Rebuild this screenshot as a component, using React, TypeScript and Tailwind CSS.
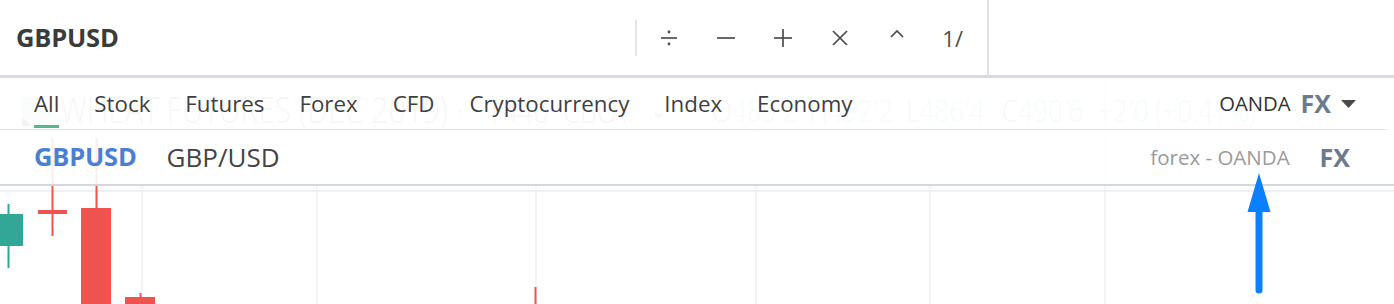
import React from "react";

function Icon({ children, w = 20, h = 20 }: { children: React.ReactNode; w?: number; h?: number }) {
  return (
    <svg width={w} height={h} viewBox={`0 0 ${w} ${h}`} fill="none" stroke="#4d4d4d" strokeWidth={1.7} strokeLinecap="butt">
      {children}
    </svg>
  );
}

function TopBar() {
  return (
    <div className="flex h-[78px] border-b-[3px] border-[#d8dae1] bg-white">
      <div className="flex w-[987px] items-center pl-4 pr-[24px]">
        <span className="text-[25.5px] font-bold tracking-[-0.2px] text-[#3b3b3b]">GBPUSD</span>
        <div className="ml-auto flex items-center">
          <div className="h-[36px] w-[2px] bg-[#e4e5e9]" />
          <div className="ml-[22px] flex items-center gap-[37px]">
            <Icon>
              <line x1="2" y1="10" x2="18" y2="10" />
              <circle cx="10" cy="4" r="1.4" fill="#4d4d4d" stroke="none" />
              <circle cx="10" cy="16" r="1.4" fill="#4d4d4d" stroke="none" />
            </Icon>
            <Icon>
              <line x1="1" y1="10" x2="19" y2="10" />
            </Icon>
            <Icon>
              <line x1="1" y1="10" x2="19" y2="10" />
              <line x1="10" y1="1" x2="10" y2="19" />
            </Icon>
            <Icon>
              <line x1="3" y1="3" x2="17" y2="17" />
              <line x1="17" y1="3" x2="3" y2="17" />
            </Icon>
            <Icon>
              <polyline points="4,9 10,3 16,9" />
            </Icon>
          </div>
          <span className="ml-[35px] text-[22px] leading-none text-[#4d4d4d]">1/</span>
        </div>
      </div>
      <div className="w-[2px] bg-[#e0e2e7]" />
      <div className="flex-1" />
    </div>
  );
}

function Chart() {
  const grid = [142, 317, 536, 756, 930, 1105];
  const red = "#ef5350";
  const green = "#32a697";
  return (
    <div className="absolute inset-0">
      <svg width={1394} height={226} className="absolute left-0 top-0">
        {grid.map((x) => (
          <line key={x} x1={x} y1={0} x2={x} y2={226} stroke="#edf1f5" strokeWidth={1.5} />
        ))}
        <line x1={0} y1={113} x2={1394} y2={113} stroke="#e8edf2" strokeWidth={1.5} />
        <rect x={7.5} y={126} width={2} height={64} fill={green} />
        <rect x={0} y={136} width={23} height={32} fill={green} />
        <rect x={51.5} y={60} width={2} height={98} fill={red} />
        <rect x={38} y={132} width={29} height={4} fill={red} />
        <rect x={95.5} y={60} width={2} height={72} fill={red} />
        <rect x={81} y={130} width={30} height={96} fill={red} />
        <rect x={139.5} y={215} width={2} height={6} fill={red} />
        <rect x={125} y={219} width={30} height={7} fill={red} />
        <rect x={534.5} y={209} width={2} height={17} fill={red} />
      </svg>
      <div className="opacity-50">
        <div className="absolute left-[22px] top-[19px] h-[29px] w-[28px] rounded-[2px] bg-[#b8bcc6]" />
        <div className="absolute left-[22px] top-[39px] h-0 w-0 border-b-[9px] border-r-[9px] border-b-[#131722] border-r-transparent" />
        <div className="absolute top-[12px] flex h-[40px] scale-y-[1.2] items-center text-[30px] font-light leading-none text-[#434651]">
          <span className="absolute left-[60px] whitespace-nowrap">WHEAT FUTURES (DEC 2019)</span>
          <span className="absolute left-[457px]">·</span>
          <span className="absolute left-[487px] text-[27px]">1440</span>
          <span className="absolute left-[548px]">·</span>
          <span className="absolute left-[563px] text-[27px]">CBOT</span>
          <span className="absolute left-[650px] text-[20px]">⌄</span>
          <span className="absolute left-[712px] whitespace-nowrap text-[26px]">
            O<span className="text-[#26a69a]">489′2</span>
          </span>
          <span className="absolute left-[809px] whitespace-nowrap text-[26px]">
            H<span className="text-[#26a69a]">492′2</span>
          </span>
          <span className="absolute left-[906px] whitespace-nowrap text-[26px]">
            L<span className="text-[#26a69a]">486′4</span>
          </span>
          <span className="absolute left-[1002px] whitespace-nowrap text-[26px]">
            C<span className="text-[#26a69a]">490′6</span>
          </span>
          <span className="absolute left-[1098px] whitespace-nowrap text-[26px] text-[#26a69a]">+2′0 (+0.41%)</span>
        </div>
      </div>
    </div>
  );
}

const tabs = ["All", "Stock", "Futures", "Forex", "CFD", "Cryptocurrency", "Index", "Economy"];

function Dropdown() {
  return (
    <div className="relative z-10 bg-white/90">
      <div className="flex h-[52px] w-[1387px] items-stretch border-b border-[#dfe2e8] pl-[34px] pr-[31px]">
        <div className="flex gap-[35px]">
          {tabs.map((t, i) => (
            <div key={t} className="relative flex items-center pt-[1px]">
              <span className="text-[22.3px] leading-none text-[#3f3f3f]">{t}</span>
              {i === 0 && <div className="absolute bottom-[1px] left-0 right-0 h-[3px] bg-[#56b888]" />}
            </div>
          ))}
        </div>
        <div className="ml-auto flex items-center">
          <span className="text-[20.3px] leading-none text-[#333333]">OANDA</span>
          <span className="ml-[10px] text-[25px] font-bold leading-none text-[#6b7a8f]">FX</span>
          <svg width={15} height={8} viewBox="0 0 15 8" className="ml-[10px]">
            <polygon points="0,0 15,0 7.5,8" fill="#4a4a4a" />
          </svg>
        </div>
      </div>
      <div className="flex h-[56px] items-center border-b-2 border-[#d5d7de] pl-[34px] pr-[44px]">
        <span className="text-[25.5px] font-bold leading-none tracking-[-0.2px] text-[#4a7fd3]">GBPUSD</span>
        <span className="ml-[30px] text-[26px] leading-none text-[#444444]">GBP/USD</span>
        <span className="ml-auto text-[20.5px] leading-none text-[#9a9a9a]">forex - OANDA</span>
        <span className="ml-[30px] text-[25px] font-bold leading-none text-[#6b7a8f]">FX</span>
      </div>
    </div>
  );
}

function Arrow() {
  return (
    <svg width={28} height={124} viewBox="0 0 28 124" className="absolute left-[1245px] top-[95px] z-20">
      <polygon points="14,0 25.5,39 2.5,39" fill="#0a80ff" />
      <line x1={14} y1={36} x2={14} y2={117} stroke="#0a80ff" strokeWidth={7} strokeLinecap="round" />
    </svg>
  );
}

export default function App() {
  return (
    <div className="relative h-[304px] w-[1394px] overflow-hidden bg-white font-['Open_Sans',sans-serif]">
      <TopBar />
      <div className="relative h-[226px]">
        <Chart />
        <Dropdown />
        <Arrow />
      </div>
    </div>
  );
}
